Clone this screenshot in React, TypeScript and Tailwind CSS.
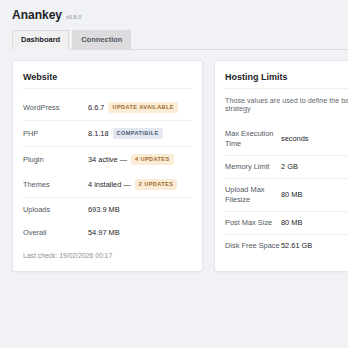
import React from "react";

const font = { fontFamily: '"Liberation Sans", Arial, sans-serif' };

function Badge({ kind, children }: { kind: "warn" | "info"; children: React.ReactNode }) {
  const cls =
    kind === "warn"
      ? "bg-[#fcecd6] text-[#9c6a2c]"
      : "bg-[#e3e8f0] text-[#4d5b78]";
  return (
    <span
      className={`inline-flex items-center h-[11px] px-[4px] rounded-[2px] text-[5.6px] font-bold tracking-[0.4px] uppercase ${cls}`}
    >
      {children}
    </span>
  );
}

function WRow({
  label,
  children,
  border,
}: {
  label: string;
  children: React.ReactNode;
  border?: boolean;
}) {
  return (
    <div className={`flex items-center py-[7px] ${border ? "border-b border-[#eceef1]" : ""}`}>
      <div className="w-[65px] shrink-0 text-[7.4px] leading-[9px] text-[#50575e]">{label}</div>
      <div className="flex items-center gap-[4px] text-[7.4px] leading-[9px] text-[#1d2327]">
        {children}
      </div>
    </div>
  );
}

function HRow({ label, value, border }: { label: string; value: string; border?: boolean }) {
  return (
    <div className={`flex items-center py-[6px] ${border ? "border-b border-[#eceef1]" : ""}`}>
      <div className="w-[56px] shrink-0 text-[7.4px] leading-[10px] text-[#50575e]">{label}</div>
      <div className="text-[7.4px] leading-[10px] text-[#1d2327] whitespace-nowrap">{value}</div>
    </div>
  );
}

export default function App() {
  return (
    <div className="w-[348px] h-[348px] overflow-hidden bg-[#f0f2f5]" style={font}>
      <div className="pl-3 pt-[8px] flex items-baseline gap-[4px]">
        <span className="text-[12px] leading-[14px] font-bold text-[#1d2327]">Anankey</span>
        <span className="text-[5.6px] text-[#8c8f94]">v0.8.0</span>
      </div>
      <div className="ml-3 mt-[8px] flex gap-[3px] border-b border-[#dcdcde] w-[600px]">
        <div className="-mb-px h-[20px] px-[8px] flex items-center text-[7.5px] font-bold text-[#1d2327] bg-[#f0f0f1] border border-[#dcdcde] border-b-[#f0f0f1]">
          Dashboard
        </div>
        <div className="-mb-px h-[20px] px-[8px] flex items-center text-[7.5px] font-bold text-[#50575e] bg-[#dcdcde] border border-[#dcdcde]">
          Connection
        </div>
      </div>

      <div className="ml-3 mt-[10px] grid grid-cols-[191px_191px] gap-[11px] w-[393px]">
        <div className="h-[212px] bg-white border border-[#e3e5e8] rounded-[3px] shadow-[0_1px_2px_rgba(0,0,0,0.04)] px-[10px] pt-[10px]">
          <div className="text-[9px] leading-[12px] font-bold text-[#1d2327] pb-[5px] border-b border-[#eceef1]">
            Website
          </div>
          <div className="mt-[6px]">
            <WRow label="WordPress" border>
              <span>6.6.7</span>
              <Badge kind="warn">Update available</Badge>
            </WRow>
            <WRow label="PHP" border>
              <span>8.1.18</span>
              <Badge kind="info">Compatibile</Badge>
            </WRow>
            <WRow label="Plugin">
              <span>34 active —</span>
              <Badge kind="warn">4 updates</Badge>
            </WRow>
            <WRow label="Themes" border>
              <span>4 installed —</span>
              <Badge kind="warn">2 updates</Badge>
            </WRow>
            <div className="flex items-center py-[7px]">
              <div className="w-[65px] shrink-0 text-[7.4px] leading-[9px] text-[#50575e]">Uploads</div>
              <div className="text-[7.4px] leading-[9px] text-[#1d2327]">693.9 MB</div>
            </div>
            <div className="flex items-center py-[7px]">
              <div className="w-[65px] shrink-0 text-[7.4px] leading-[9px] text-[#50575e]">Overall</div>
              <div className="text-[7.4px] leading-[9px] text-[#1d2327]">54.97 MB</div>
            </div>
          </div>
          <div className="mt-[8px] text-[6.8px] leading-[8px] text-[#8c8f94]">
            Last check: 19/02/2026 00:17
          </div>
        </div>

        <div className="h-[212px] bg-white border border-[#e3e5e8] rounded-[3px] shadow-[0_1px_2px_rgba(0,0,0,0.04)] px-[10px] pt-[10px]">
          <div className="text-[9px] leading-[12px] font-bold text-[#1d2327] pb-[5px] border-b border-[#eceef1]">
            Hosting Limits
          </div>
          <div className="mt-[8px] max-w-[160px] text-[7.2px] leading-[8px] text-[#646970]">
            Those values are used to define the backup strategy
          </div>
          <div className="mt-[10px]">
            <HRow label="Max Execution Time" value="seconds" border />
            <HRow label="Memory Limit" value="2 GB" border />
            <HRow label="Upload Max Filesize" value="80 MB" border />
            <HRow label="Post Max Size" value="80 MB" border />
            <HRow label="Disk Free Space" value="52.61 GB" />
          </div>
        </div>
      </div>
    </div>
  );
}
